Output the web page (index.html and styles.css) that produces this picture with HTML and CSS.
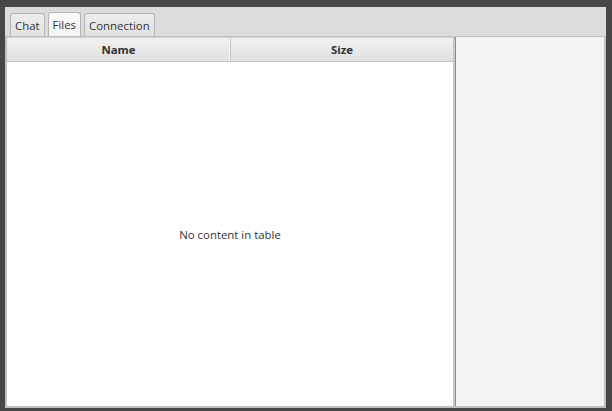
FILE: index.html
```html
<!DOCTYPE html>
<html>
<head>
<meta charset="utf-8">
<link rel="stylesheet" href="styles.css">
</head>
<body>
<div class="window">
  <div class="tabbar">
    <div class="tab">Chat</div>
    <div class="tab selected">Files</div>
    <div class="tab">Connection</div>
  </div>
  <div class="content">
    <div class="table">
      <div class="thead">
        <div class="th th-name">Name</div>
        <div class="th th-size">Size</div>
      </div>
      <div class="tbody">No content in table</div>
    </div>
    <div class="divider"></div>
    <div class="side"></div>
  </div>
</div>
</body>
</html>
```
FILE: styles.css
```css
html, body {
  margin: 0;
  padding: 0;
  background: #474747;
  font-family: "Open Sans", "Noto Sans", sans-serif;
  font-size: 11.4px;
  color: #333333;
}
.window {
  margin: 7px 0 0 5px;
  width: 601px;
  height: 401px;
  display: flex;
  flex-direction: column;
  background: #dcdcdc;
}
.tabbar {
  height: 29px;
  display: flex;
  align-items: flex-end;
  gap: 3px;
  padding-left: 5px;
  background: #dcdcdc;
  box-sizing: border-box;
}
.tab {
  height: 23px;
  box-sizing: border-box;
  padding: 1px 4px 0 4px;
  display: flex;
  align-items: center;
  border: 1px solid #b4b4b4;
  border-bottom: none;
  border-radius: 3px 3px 0 0;
  background: linear-gradient(#ececec, #e2e2e2);
  color: #333;
  line-height: 1;
}
.tab.selected {
  background: linear-gradient(#fafafa, #f4f4f4);
  height: 24px;
}
.content {
  flex: 1;
  display: flex;
  border: 2px solid #c0c0c0;
  border-top: 1px solid #c0c0c0;
  min-height: 0;
}
.table {
  width: 446px;
  display: flex;
  flex-direction: column;
  background: #ffffff;
  border-top: 1px solid #d4d4d4;
}
.thead {
  height: 24px;
  display: flex;
  background: linear-gradient(#f0f0f0, #e1e1e1);
  border-bottom: 1px solid #c8c8c8;
  box-sizing: border-box;
}
.th {
  display: flex;
  align-items: center;
  justify-content: center;
  font-weight: bold;
  color: #333;
}
.th-name {
  width: 223px;
  border-right: 1px solid #c8c8c8;
  box-shadow: inset -1px 0 0 #f4f4f4;
}
.th-size {
  flex: 1;
}
.tbody {
  flex: 1;
  display: flex;
  align-items: center;
  justify-content: center;
  color: #333;
}
.divider {
  width: 3px;
  background: #c6c6c6;
  border-right: 1px solid #8e8e8e;
  box-sizing: border-box;
}
.side {
  flex: 1;
  background: #f3f3f3;
}
```
